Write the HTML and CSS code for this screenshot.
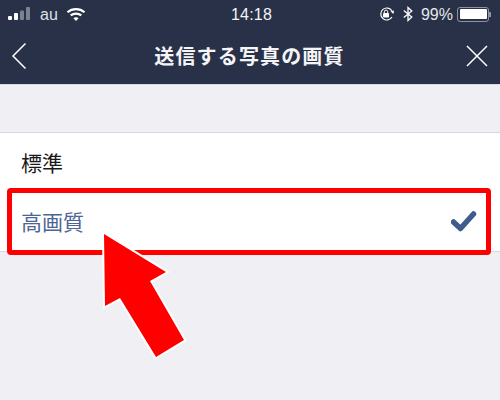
FILE: index.html
```html
<!DOCTYPE html>
<html lang="ja">
<head>
<meta charset="utf-8">
<title>送信する写真の画質</title>
<link rel="stylesheet" href="styles.css">
</head>
<body>
<div class="screen">
  <header class="header">
    <div class="status">
      <div class="status-left">
        <svg class="signal" width="31" height="14" viewBox="0 0 31 14"><rect x="0" y="9" width="4" height="4" rx="1" fill="#fff"/><rect x="6" y="6" width="4" height="7" rx="1" fill="#fff"/><rect x="12" y="3.5" width="4" height="9.5" rx="1" fill="#7b8292"/><rect x="18" y="0" width="4" height="13" rx="1" fill="#7b8292"/></svg>
        <span class="carrier">au</span>
        <svg class="wifi" width="20" height="15" viewBox="0 0 20 15"><path d="M1.5 5.2C6.2 1 13.8 1 18.5 5.2" fill="none" stroke="#fff" stroke-width="2.2"/><path d="M4.7 8.4C7.7 5.9 12.3 5.9 15.3 8.4" fill="none" stroke="#fff" stroke-width="2.2"/><path d="M7.4 11.2C8.9 10 11.1 10 12.6 11.2L10 14Z" fill="#fff"/></svg>
      </div>
      <span class="time">14:18</span>
      <div class="status-right">
        <svg class="lock" width="18" height="16" viewBox="0 0 18 16"><path d="M14 5A6 6 0 1 0 14 11" fill="none" stroke="#fff" stroke-width="1.2"/><path d="M12.5 5.5L16 4.5 15.500 8Z" fill="#fff"/><rect x="5" y="7" width="6" height="4.5" rx=".8" fill="#fff"/><path d="M6.3 7V5.8a1.7 1.7 0 0 1 3.4 0V7" fill="none" stroke="#fff"/></svg>
        <svg class="bt" width="10" height="16" viewBox="0 0 10 16"><path d="M.8 4.5L8.800 11 5 14.500V1.500L8.800 5 .8 11.500" fill="none" stroke="#fff" stroke-width="1.3"/></svg>
        <span class="battery-text">99%</span>
        <div class="battery"><div class="battery-fill"></div></div>
        <div class="battery-tip"></div>
      </div>
    </div>
    <div class="nav">
      <svg width="16" height="28" viewBox="0 0 16 28"><path d="M14.5 1.5L2 14 14.5 26.5" fill="none" stroke="#fff" stroke-width="1.5"/></svg>
      <h1 class="title">送信する写真の画質</h1>
      <svg width="22" height="22" viewBox="0 0 22 22"><path d="M1 1L21 21M21 1L1 21" fill="none" stroke="#fff" stroke-width="1.5"/></svg>
    </div>
  </header>
  <div class="list">
    <div class="row row-first"><span>標準</span></div>
    <div class="row row-selected">
      <span>高画質</span>
      <svg class="check" width="26" height="22" viewBox="0 0 26 22"><path d="M2.5 11L9.5 17.5 22.5 3" fill="none" stroke="#3f5c8c" stroke-width="5.5" stroke-linejoin="round" stroke-linecap="round"/></svg>
    </div>
    <div class="highlight"></div>
    <svg class="arrow" width="90" height="135" viewBox="0 0 90 135"><path class="arrow-shape" d="M4 6L66 44 50 53 84 112 56 129 20 70 5 78Z"/></svg>
  </div>
</div>
</body>
</html>
```

FILE: styles.css
```css
* { box-sizing: border-box; margin: 0; padding: 0; }
html, body { width: 500px; height: 400px; overflow: hidden; }
body { background: #efeff4; font-family: "Noto Sans CJK JP", "Liberation Sans", sans-serif; }
.screen { width: 500px; height: 400px; position: relative; }
.header { height: 85px; background: #283148; color: #fff; border-bottom: 1px solid #d8d8de; }
.status { height: 28px; display: flex; align-items: center; justify-content: space-between; position: relative; padding: 0 0 0 8px; }
.status-left { display: flex; align-items: center; gap: 6px; }
.signal { margin-right: -5px; }
.carrier, .time, .battery-text { font-family: "Liberation Sans", sans-serif; font-size: 16px; margin-top: 2px; }
.carrier { color: #dfe1e6; margin-right: 2px; }
.time { position: absolute; left: 231px; color: #f4f4f6; letter-spacing: .2px; }
.status-right { display: flex; align-items: center; gap: 6px; padding-right: 9px; }
.lock { margin-right: 1px; }
.battery-text { color: #e6e7eb; margin-left: 2px; }
.battery { width: 32px; height: 15px; border: 1px solid #8d93a2; border-radius: 3px; padding: 1.5px; margin-left: -2px; }
.battery-fill { width: 100%; height: 100%; background: #fff; border-radius: 1px; }
.battery-tip { width: 2px; height: 5px; background: #8d93a2; margin-left: -6px; }
.nav { height: 56px; display: flex; align-items: center; justify-content: space-between; padding: 0 12px 0 11px; }
.title { font-size: 20px; font-weight: 700; color: #f5f5f7; letter-spacing: 1.15px; margin: 0 0 2px 6px; }
.list { margin-top: 47px; position: relative; background: #fff; border-top: 1px solid #d8d8de; border-bottom: 1px solid #d8d8de; height: 120px; }
.row { height: 59px; display: flex; align-items: center; justify-content: space-between; padding: 0 23px 0 21px; font-size: 21px; color: #1a1a1a; }
.row-first { height: 58px; padding-bottom: 1px; }
.row-selected { height: 61px; color: #4c6594; padding-bottom: 2px; }
.check { margin-top: 2px; }
.highlight { position: absolute; left: 7px; top: 55px; width: 484px; height: 67px; border: 5px solid #f00; border-radius: 4px; }
.arrow { position: absolute; left: 100px; top: 95px; }
.arrow-shape { fill: #f00; stroke: #fff; stroke-width: 4px; paint-order: stroke; }
```
